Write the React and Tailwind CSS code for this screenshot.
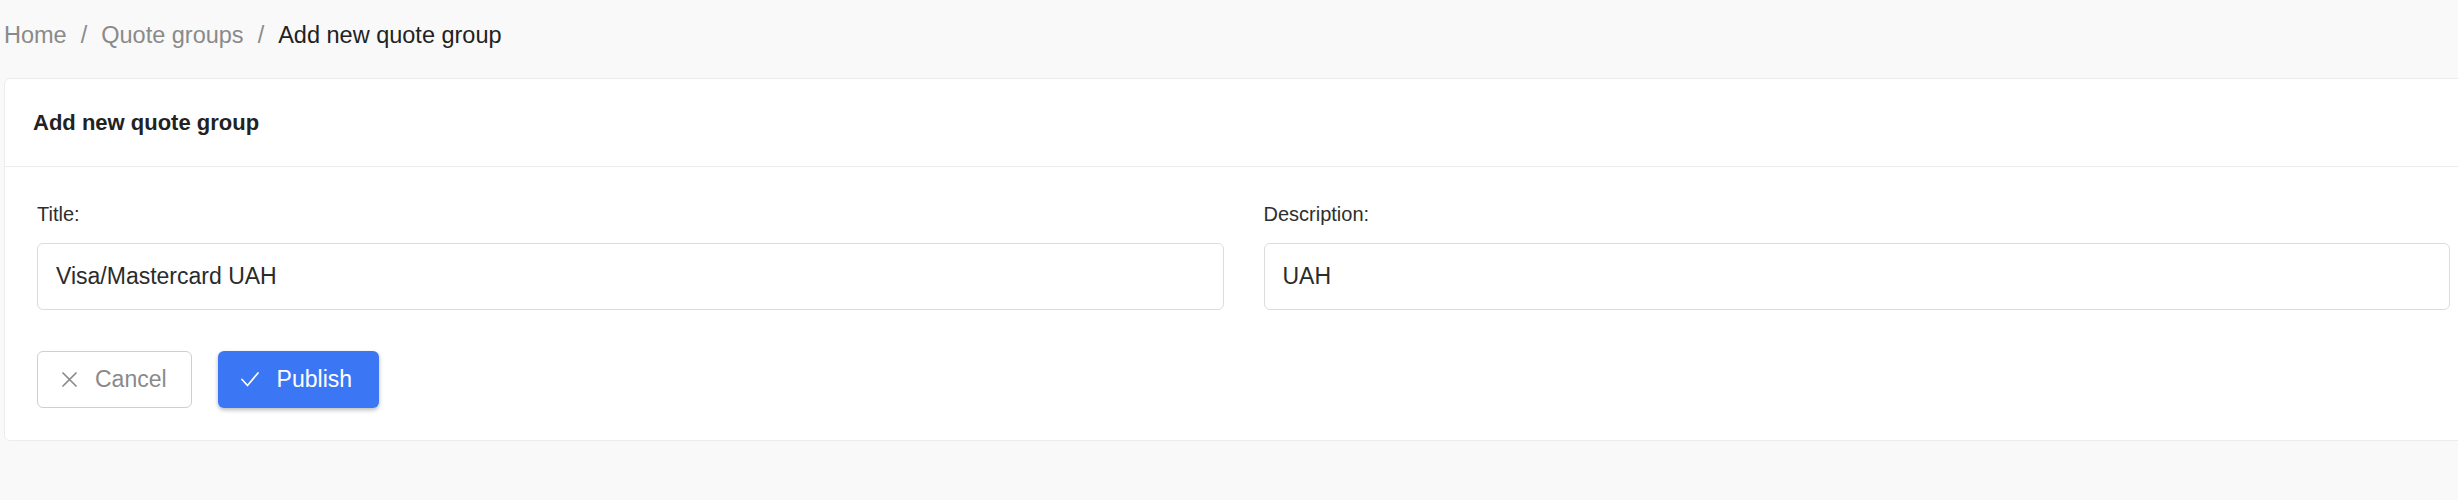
import React, { useState } from "react";

const font = { fontFamily: '"Liberation Sans", Arial, sans-serif' };

function XIcon() {
  return (
    <svg width="15" height="15" viewBox="0 0 15 15" fill="none" stroke="#8a8a8a" strokeWidth="1.7" strokeLinecap="round">
      <path d="M1 1 14 14M14 1 1 14" />
    </svg>
  );
}

function CheckIcon() {
  return (
    <svg width="18" height="15" viewBox="0 0 18 15" fill="none" stroke="#ffffff" strokeWidth="1.7" strokeLinecap="round" strokeLinejoin="round">
      <path d="M1 7.5 6.5 13.5 17 1" />
    </svg>
  );
}

function Field({ label, value, onChange }) {
  return (
    <div className="flex flex-col">
      <label className="text-[20px] leading-[24px] text-[#2e2e2e]">{label}</label>
      <input
        value={value}
        onChange={(e) => onChange(e.target.value)}
        className="mt-[17px] h-[67px] w-full rounded-[6px] border border-[#dcdcdc] bg-white px-[18px] text-[23px] text-[#2b2b2b] outline-none"
        style={font}
      />
    </div>
  );
}

export default function App() {
  const [title, setTitle] = useState("Visa/Mastercard UAH");
  const [desc, setDesc] = useState("UAH");

  return (
    <div className="min-h-[500px] w-[2458px] overflow-hidden bg-[#f9f9f9] px-1 pt-[19px]" style={font}>
      {/* Breadcrumb */}
      <nav className="flex h-[32px] items-center text-[23.5px] leading-[32px]">
        <span className="text-[#8a8a8a]">Home</span>
        <span className="px-[14px] text-[#8a8a8a]">/</span>
        <span className="text-[#8a8a8a]">Quote groups</span>
        <span className="px-[14px] text-[#8a8a8a]">/</span>
        <span className="text-[#222222]">Add new quote group</span>
      </nav>

      {/* Card */}
      <div className="mt-[27px] w-[2479px] rounded-[6px] border border-[#ececec] bg-white">
        <div className="flex h-[88px] items-center border-b border-[#ececec] px-[28px]">
          <h1 className="text-[22px] font-semibold text-[#222222]">Add new quote group</h1>
        </div>

        <div className="px-8 pt-[35px] pb-8">
          <div className="grid grid-cols-2 gap-x-[40px]">
            <Field label="Title:" value={title} onChange={setTitle} />
            <Field label="Description:" value={desc} onChange={setDesc} />
          </div>

          <div className="mt-[41px] flex gap-[26px]">
            <button className="flex h-[57px] items-center gap-[18px] rounded-[6px] border border-[#cfcfcf] bg-white px-[24px] text-[23px] text-[#8a8a8a]">
              <XIcon />
              Cancel
            </button>
            <button className="flex h-[57px] items-center gap-[18px] rounded-[6px] bg-[#3b77f5] pl-[23px] pr-[27px] text-[23px] text-white shadow-[0_2px_4px_rgba(0,0,0,0.28)]">
              <CheckIcon />
              Publish
            </button>
          </div>
        </div>
      </div>
    </div>
  );
}
